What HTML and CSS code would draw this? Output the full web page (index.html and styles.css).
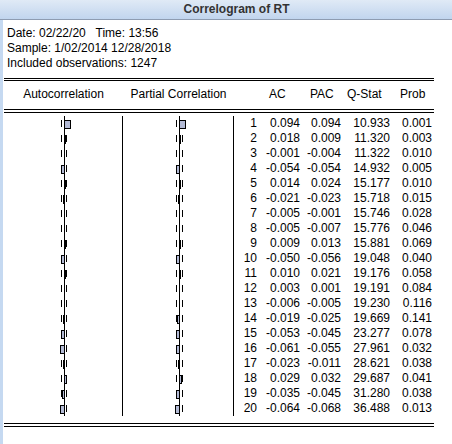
FILE: index.html
```html
<!DOCTYPE html>
<html>

	<head>
		<meta charset="UTF-8">
		<title>Correlogram of RT</title>
		<link rel="stylesheet" href="styles.css">
	</head>

	<body>

		<div class="titlebar">Correlogram of RT</div>
		<div class="frame">
			<div class="info">
				<p>Date: 02/22/20   Time: 13:56</p>
				<p>Sample: 1/02/2014 12/28/2018</p>
				<p>Included observations: 1247</p>
			</div>
			<div class="table">
				<div class="dbl"></div>
				<div class="head">
					<div class="c-chart">Autocorrelation</div>
					<div class="c-chart">Partial Correlation</div>
					<div></div>
					<div class="h-ac">AC</div>
					<div class="h-pac">PAC</div>
					<div class="h-q">Q-Stat</div>
					<div class="h-prob">Prob</div>
				</div>
				<div class="dbl wide"></div>
				<div class="rows" id="rows"></div>
				<div class="dbl wide foot"></div>
			</div>
		</div>

		<script type="text/javascript">
			var data = [
				[1, 0.094, 0.094, "10.933", "0.001"],
				[2, 0.018, 0.009, "11.320", "0.003"],
				[3, -0.001, -0.004, "11.322", "0.010"],
				[4, -0.054, -0.054, "14.932", "0.005"],
				[5, 0.014, 0.024, "15.177", "0.010"],
				[6, -0.021, -0.023, "15.718", "0.015"],
				[7, -0.005, -0.001, "15.746", "0.028"],
				[8, -0.005, -0.007, "15.776", "0.046"],
				[9, 0.009, 0.013, "15.881", "0.069"],
				[10, -0.050, -0.056, "19.048", "0.040"],
				[11, 0.010, 0.021, "19.176", "0.058"],
				[12, 0.003, 0.001, "19.191", "0.084"],
				[13, -0.006, -0.005, "19.230", "0.116"],
				[14, -0.019, -0.025, "19.669", "0.141"],
				[15, -0.053, -0.045, "23.277", "0.078"],
				[16, -0.061, -0.055, "27.961", "0.032"],
				[17, -0.023, -0.011, "28.621", "0.038"],
				[18, 0.029, 0.032, "29.687", "0.041"],
				[19, -0.035, -0.045, "31.280", "0.038"],
				[20, -0.064, -0.068, "36.488", "0.013"]
			];

			// one row of the bar chart: zero line, the two bounds, the bar
			function bar(v, w, z, l, r) {
				var px = Math.round(Math.abs(v) * 60);
				var s = '<svg width="' + w + '" height="15" shape-rendering="crispEdges">';
				s += '<line x1="' + (z + 0.5) + '" y1="0" x2="' + (z + 0.5) + '" y2="15" stroke="#000"/>';
				s += '<line x1="' + (l + 0.5) + '" y1="4" x2="' + (l + 0.5) + '" y2="11" stroke="#000"/>';
				s += '<line x1="' + (r + 0.5) + '" y1="4" x2="' + (r + 0.5) + '" y2="11" stroke="#000"/>';
				if (px >= 2) {
					var x = v < 0 ? z - px : z;
					s += '<rect x="' + (x + 0.5) + '" y="4.5" width="' + px + '" height="8" fill="#b3bad5" stroke="#000"/>';
				} else if (px == 1) {
					var x1 = v < 0 ? z - 1 : z + 1;
					s += '<rect x="' + x1 + '" y="4" width="1" height="9" fill="#000"/>';
				}
				return s + '</svg>';
			}

			function fmt(v) {
				return v.toFixed(3);
			}

			var html = "";
			for (var i = 0; i < data.length; i++) {
				var d = data[i];
				html += '<div class="row">' +
					'<div class="c-chart">' + bar(d[1], 118, 60, 57, 62) + '</div>' +
					'<div class="c-chart">' + bar(d[2], 110, 56, 53, 59) + '</div>' +
					'<div class="num">' + d[0] + '</div>' +
					'<div class="num">' + fmt(d[1]) + '</div>' +
					'<div class="num">' + fmt(d[2]) + '</div>' +
					'<div class="num">' + d[3] + '</div>' +
					'<div class="num">' + d[4] + '</div>' +
					'</div>';
			}
			document.querySelector("#rows").innerHTML = html;
		</script>
	</body>

</html>
```

FILE: styles.css
```css
body {
	margin: 0;
	background-color: #fff;
	font-family: "Liberation Sans", Arial, sans-serif;
	font-size: 12px;
	color: #000;
}

.titlebar {
	height: 19px;
	line-height: 19px;
	padding-left: 21px;
	border-bottom: 1px solid #8e9cb1;
	background: linear-gradient(#e0eaf6, #c1d5ee);
	text-align: center;
	font-weight: bold;
	color: #333;
}

.frame {
	height: 424px;
	border-left: 3px solid #c5d9f1;
}

.info {
	padding: 6px 0 0 4px;
	line-height: 15px;
}

.info p {
	margin: 0;
	white-space: pre;
}

.table {
	width: 430px;
	margin: 7px 0 0 1px;
}

.dbl {
	height: 1px;
	border-top: 1px solid #000;
	border-bottom: 1px solid #000;
}

.dbl.wide {
	height: 2px;
}

.foot {
	margin-top: 7px;
}

.head,
.row {
	display: grid;
	grid-template-columns: 119px 111px 23px 43px 41px 49px 42px;
	line-height: 15px;
}

.head {
	padding: 6px 0 7px;
}

.head .c-chart {
	text-align: center;
}

.h-ac {
	padding-left: 12px;
}

.h-pac {
	padding-left: 10px;
}

.h-q {
	padding-left: 6px;
}

.h-prob {
	padding-left: 10px;
}

.rows {
	padding-top: 3px;
}

.row {
	height: 15px;
}

.row .c-chart {
	border-right: 1px solid #000;
}

.row .c-chart svg {
	display: block;
}

.num {
	text-align: right;
	white-space: nowrap;
}
```
